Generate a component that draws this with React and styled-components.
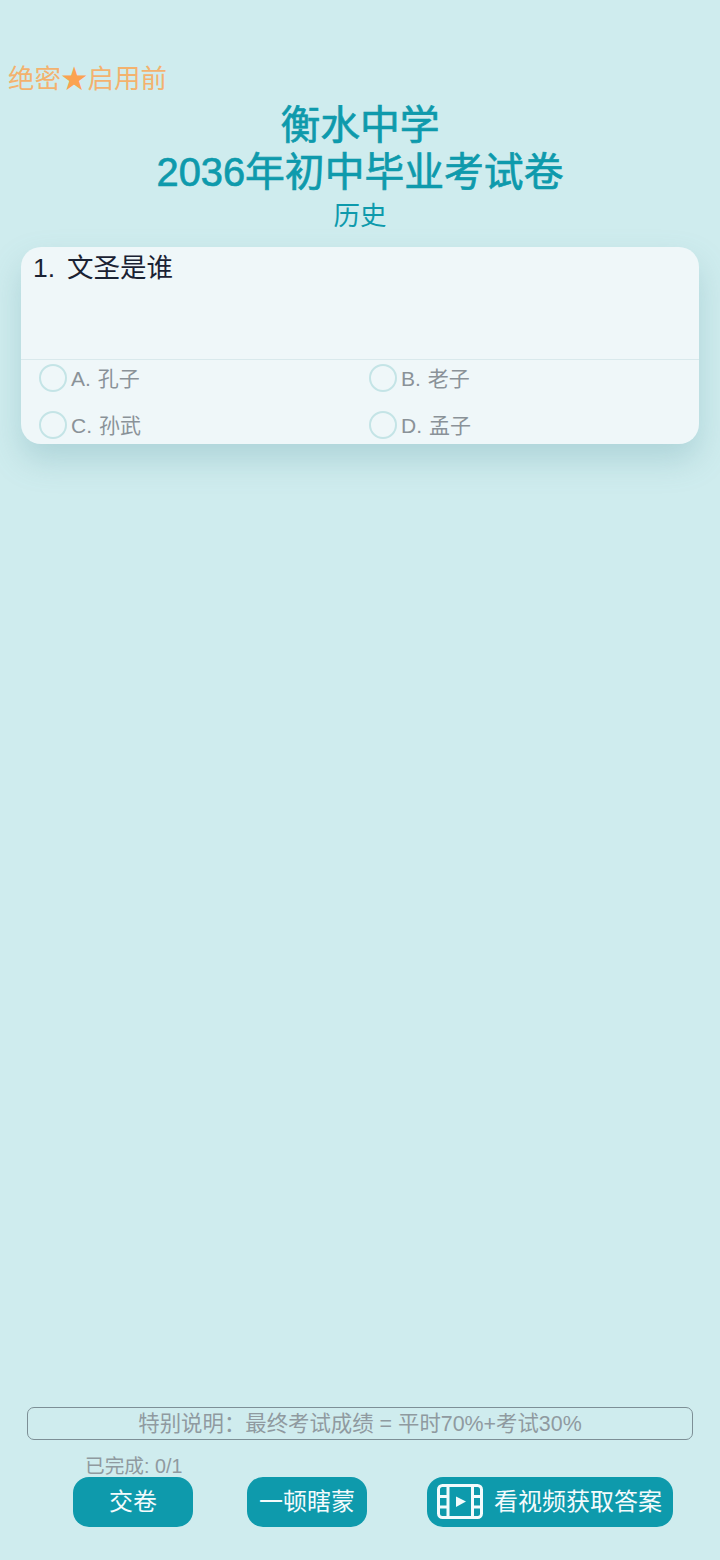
import React from "react";
import styled, { createGlobalStyle } from "styled-components";

const Global = createGlobalStyle`
  html, body { margin: 0; padding: 0; background: #cfecee; }
  body { font-family: "Liberation Sans", "Noto Sans CJK SC", sans-serif; }
  * { box-sizing: border-box; }
`;

const Page = styled.div`
  width: 720px;
  height: 1560px;
  overflow: hidden;
  display: flex;
  flex-direction: column;
  background: #cfecee;
`;

const Secret = styled.div`
  margin: 63px 0 0 8px;
  font-size: 26.5px;
  line-height: 32px;
  color: #f3b26e;
  white-space: nowrap;
  span { color: #fba350; }
`;

const Header = styled.header`
  margin-top: 7px;
  text-align: center;
  color: #0e9aac;
`;

const Title = styled.h1`
  margin: 0;
  font-size: 39.8px;
  line-height: 47px;
  font-weight: 400;
  -webkit-text-stroke: 0.7px #0e9aac;
`;

const Subject = styled.div`
  margin-top: 0;
  font-size: 26.5px;
  line-height: 40px;
`;

const Card = styled.section`
  margin: 11px 21px 0;
  height: 197px;
  border-radius: 20px;
  background: #eff7f9;
  box-shadow: 0 16px 32px rgba(90, 150, 160, 0.28);
  overflow: hidden;
`;

const Question = styled.div`
  height: 113px;
  padding: 4px 12px 0;
  display: flex;
  gap: 12px;
  font-size: 26.5px;
  line-height: 34px;
  color: #1a2233;
  border-bottom: 1px solid #d9e9ec;
`;

const Options = styled.div`
  display: grid;
  grid-template-columns: 330px 1fr;
  grid-auto-rows: 47px;
  padding: 4px 0 0 18px;
`;

const Option = styled.label`
  display: flex;
  align-items: flex-start;
  gap: 4px;
  font-size: 21px;
  line-height: 30px;
  color: #8a9298;
`;

const Radio = styled.span`
  width: 28px;
  height: 28px;
  flex: none;
  border-radius: 50%;
  border: 2.5px solid #c4e4e6;
`;

const OptionKey = styled.span`
  margin-right: 7px;
`;

const Spacer = styled.div`
  flex: 1;
`;

const Notice = styled.div`
  margin: 0 27px;
  height: 33px;
  border: 1.5px solid #7d8f96;
  border-radius: 7px;
  text-align: center;
  font-size: 21.4px;
  line-height: 32px;
  color: #8f9aa0;
`;

const Progress = styled.div`
  margin: 14px 0 0 85px;
  font-size: 19.7px;
  line-height: 25px;
  height: 23px;
  color: #8f9aa0;
`;

const Actions = styled.div`
  display: flex;
  margin: 0 0 33px 73px;
`;

const Button = styled.button`
  width: ${(p) => p.$w}px;
  margin-right: ${(p) => p.$mr || 0}px;
  height: 50px;
  border: 0;
  padding: 0 0 6px;
  border-radius: 16px;
  background: #0e9aac;
  color: #f4fbfc;
  font-family: inherit;
  font-size: 24px;
  display: flex;
  align-items: center;
  justify-content: center;
  gap: 11px;
`;

const FilmSvg = styled.svg`
  margin: 5px 0 0 -1px;
`;

const FilmIcon = () => (
  <FilmSvg width="46" height="35" viewBox="0 0 46 35" fill="none" stroke="#f4fbfc" strokeWidth="3">
    <rect x="1.5" y="1.5" width="43" height="32" rx="4" />
    <path d="M11 1.5v32M35.5 1.5v32M1.5 12.5h9.5M1.5 23h9.5M35.5 12.5h9M35.5 23h9" />
    <path d="M19 12.5L29 17.5L19 23Z" fill="#f4fbfc" stroke="none" />
  </FilmSvg>
);

const options = [
  ["A.", "孔子"],
  ["B.", "老子"],
  ["C.", "孙武"],
  ["D.", "孟子"],
];

export default function App() {
  return (
    <Page>
      <Global />
      <Secret>绝密<span>★</span>启用前</Secret>
      <Header>
        <Title>衡水中学<br />2036年初中毕业考试卷</Title>
        <Subject>历史</Subject>
      </Header>
      <Card>
        <Question><span>1.</span><span>文圣是谁</span></Question>
        <Options>
          {options.map(([k, v]) => (
            <Option key={k}><Radio /><span><OptionKey>{k}</OptionKey>{v}</span></Option>
          ))}
        </Options>
      </Card>
      <Spacer />
      <Notice>特别说明：最终考试成绩 = 平时70%+考试30%</Notice>
      <Progress>已完成: 0/1</Progress>
      <Actions>
        <Button $w={120} $mr={54}>交卷</Button>
        <Button $w={120} $mr={60}>一顿瞎蒙</Button>
        <Button $w={246}><FilmIcon />看视频获取答案</Button>
      </Actions>
    </Page>
  );
}
